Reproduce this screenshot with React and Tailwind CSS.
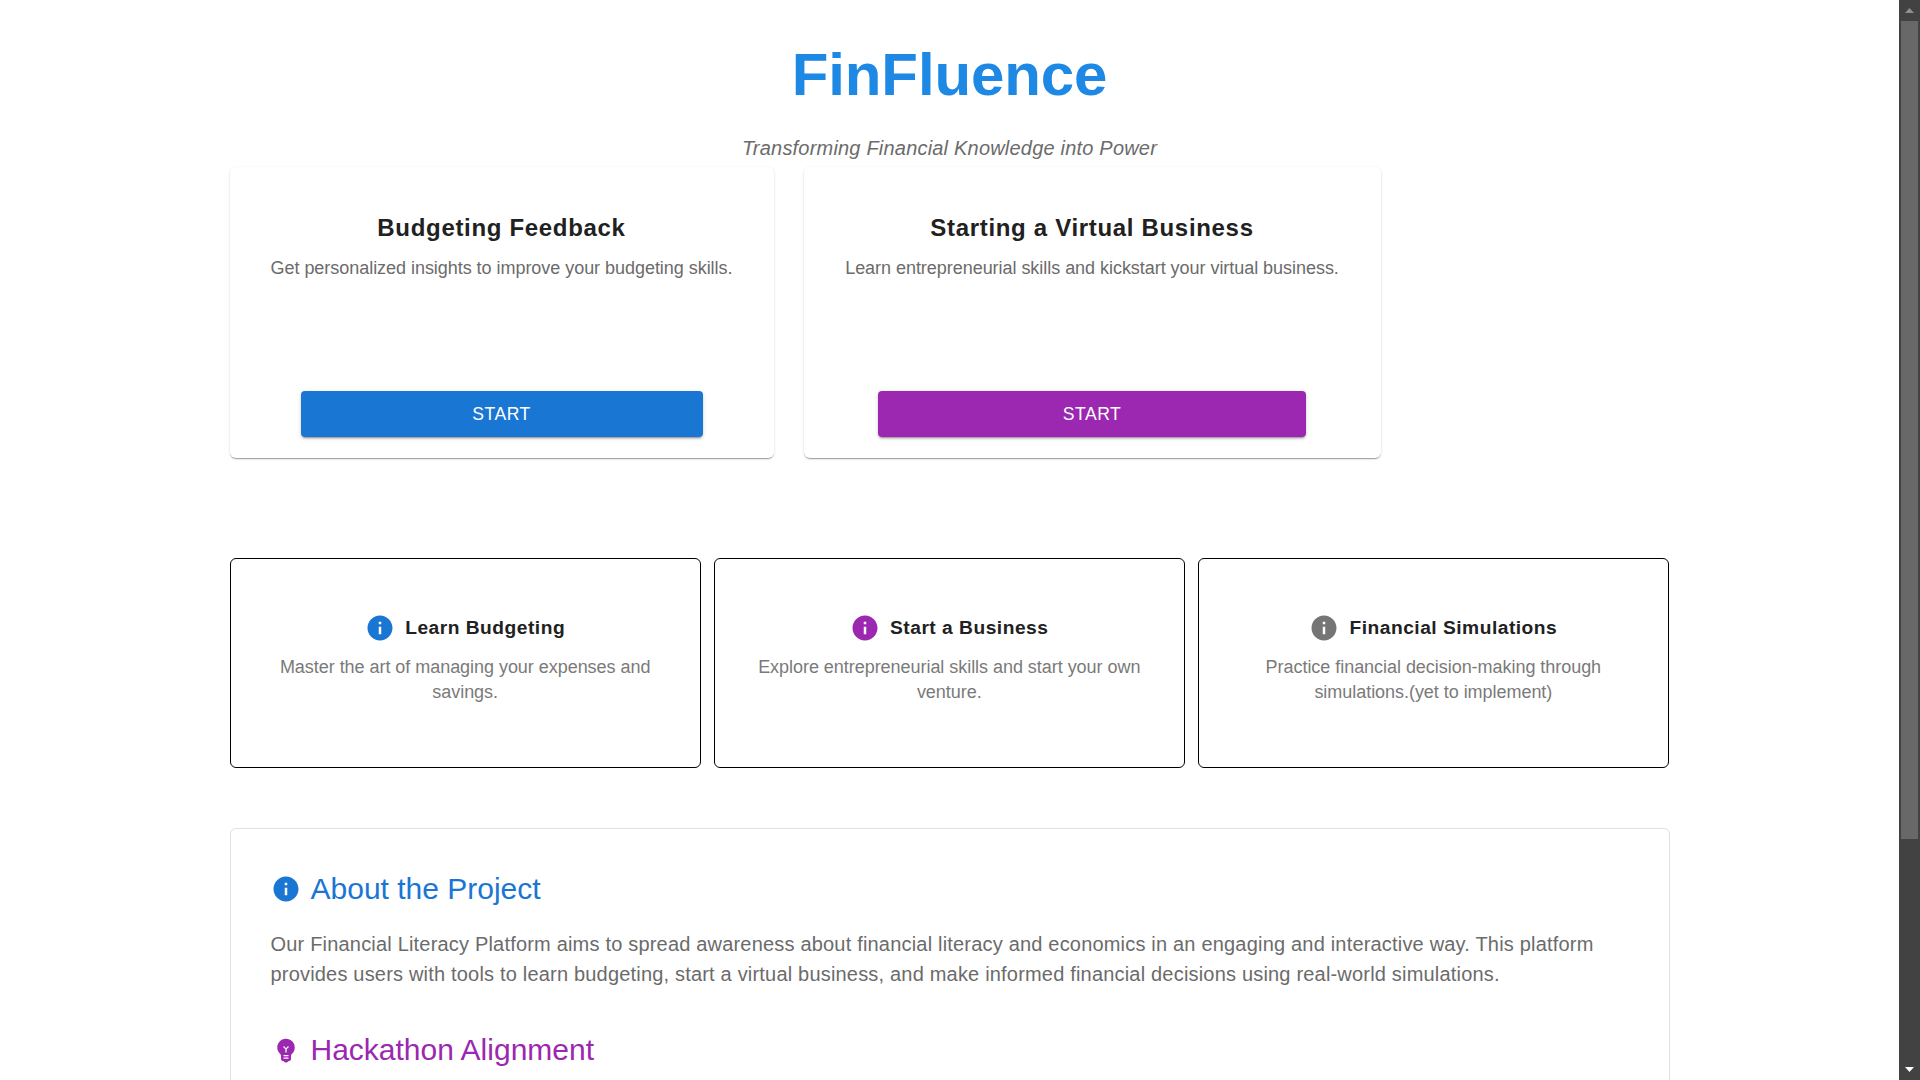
const INFO = "M12 2C6.48 2 2 6.48 2 12s4.48 10 10 10 10-4.48 10-10S17.52 2 12 2zm1 15h-2v-6h2v6zm0-8h-2V7h2v2z";
const BULB = "M12 3c-.46 0-.93.04-1.4.14-2.76.53-4.96 2.76-5.48 5.52-.48 2.61.48 5.01 2.22 6.56.43.38.66.91.66 1.47V19c0 1.1.9 2 2 2h.28c.35.6.98 1 1.72 1s1.38-.4 1.72-1H14c1.1 0 2-.9 2-2v-2.31c0-.55.22-1.09.64-1.46C18.09 13.95 19 12.08 19 10c0-3.87-3.13-7-7-7zm2 16h-4v-1h4v1zm0-2h-4v-1h4v1zm-1.5-5.59V14h-1v-2.59L9.67 9.59l.71-.71L12 10.5l1.62-1.62.71.71-1.83 1.82z";

function Icon({ d, className }) {
  return (
    <svg viewBox="0 0 24 24" fill="currentColor" className={`w-[30px] h-[30px] shrink-0 ${className}`}>
      <path d={d} />
    </svg>
  );
}

const cardShadow = "shadow-[0_2px_1px_-1px_rgba(0,0,0,0.2),0_1px_1px_0_rgba(0,0,0,0.14),0_1px_3px_0_rgba(0,0,0,0.12)]";
const buttonShadow = "shadow-[0_3px_1px_-2px_rgba(0,0,0,0.2),0_2px_2px_0_rgba(0,0,0,0.14),0_1px_5px_0_rgba(0,0,0,0.12)]";

function ActionCard({ title, text, width, button }) {
  return (
    <div className={`flex flex-col items-center h-[291px] pt-[44px] bg-white rounded-md ${width} ${cardShadow}`}>
      <h3 className="text-[24px] leading-[34px] font-bold tracking-[0.68px] text-[#212121]">{title}</h3>
      <p className="mt-[9px] text-[18px] leading-[28px] tracking-[-0.04px] text-[#6b6b6b]">{text}</p>
      <button className={`mt-auto mb-[21px] h-[46px] rounded text-white text-[17.6px] tracking-[0.5px] ${button} ${buttonShadow}`}>START</button>
    </div>
  );
}

function Feature({ title, text, color }) {
  return (
    <div className="h-[210px] px-8 pt-[54px] border border-black rounded-md bg-white text-center">
      <div className="flex items-center justify-center gap-[10px] h-[30px]">
        <Icon d={INFO} className={color} />
        <h4 className="text-[19.2px] leading-[30px] font-bold tracking-[0.5px] text-[#212121]">{title}</h4>
      </div>
      <p className="mt-[12px] text-[18px] leading-[25px] tracking-[-0.04px] text-[#7a7a7a]">{text}</p>
    </div>
  );
}

export default function App() {
  return (
    <div className="flex h-screen overflow-hidden bg-white font-['Liberation_Sans',Arial,sans-serif]">
      <main className="flex-1 min-w-0 px-[229.5px]">
        <h1 className="pt-[40px] text-center text-[60px] leading-[70px] font-bold tracking-[-0.12px] text-[#1e88e5]">FinFluence</h1>
        <p className="mt-[23px] text-center text-[20px] leading-[30px] italic tracking-[0.2px] text-[#6b6b6b]">Transforming Financial Knowledge into Power</p>

        <div className="flex gap-[30px] mt-[4px]">
          <ActionCard title="Budgeting Feedback" text="Get personalized insights to improve your budgeting skills." width="w-[544px]" button="w-[402px] bg-[#1976d2]" />
          <ActionCard title="Starting a Virtual Business" text="Learn entrepreneurial skills and kickstart your virtual business." width="w-[577px]" button="w-[428px] bg-[#9c27b0]" />
        </div>

        <div className="grid grid-cols-3 gap-[12.8px] w-[1439.5px] mt-[100px]">
          <Feature title="Learn Budgeting" text="Master the art of managing your expenses and savings." color="text-[#1976d2]" />
          <Feature title="Start a Business" text="Explore entrepreneurial skills and start your own venture." color="text-[#9c27b0]" />
          <Feature title="Financial Simulations" text="Practice financial decision-making through simulations.(yet to implement)" color="text-[#757575]" />
        </div>

        <section className="mt-[60px] px-10 pt-[40px] pb-10 border border-[#e0e0e0] rounded-md bg-white">
          <div className="flex items-center gap-[10px] h-[40px]">
            <Icon d={INFO} className="text-[#1976d2]" />
            <h2 className="text-[30px] leading-[40px] text-[#1976d2]">About the Project</h2>
          </div>
          <p className="mt-[20px] text-[20px] leading-[30px] tracking-[0.19px] text-[#6b6b6b]">
            Our Financial Literacy Platform aims to spread awareness about financial literacy and economics in an engaging and interactive way. This platform provides users with tools to learn budgeting, start a virtual business, and make informed financial decisions using real-world simulations.
          </p>
          <div className="flex items-center gap-[10px] h-[40px] mt-[41px]">
            <Icon d={BULB} className="text-[#9c27b0]" />
            <h2 className="text-[30px] leading-[40px] text-[#9c27b0]">Hackathon Alignment</h2>
          </div>
        </section>
      </main>

      {/* window scrollbar */}
      <aside className="flex flex-col items-center w-[21px] shrink-0 bg-[#424242]">
        <div className="flex items-center justify-center h-[21px] shrink-0">
          <svg viewBox="0 0 9 5" className="w-[9px] h-[5px] text-[#8f8f8f]" fill="currentColor"><path d="M4.5 0 9 5H0z" /></svg>
        </div>
        <div className="w-[17px] h-[818px] bg-[#686868]" />
        <div className="flex items-center justify-center h-[21px] mt-auto shrink-0">
          <svg viewBox="0 0 9 5" className="w-[9px] h-[5px] text-white" fill="currentColor"><path d="M0 0h9L4.5 5z" /></svg>
        </div>
      </aside>
    </div>
  );
}
